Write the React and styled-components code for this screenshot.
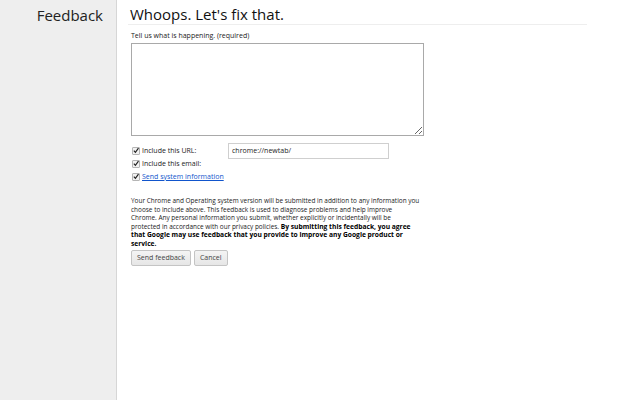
import React from "react";
import styled, { createGlobalStyle } from "styled-components";

const Global = createGlobalStyle`
  html, body { margin: 0; padding: 0; background: #fff; }
  body { font-family: "Open Sans", "Noto Sans", sans-serif; color: #222; }
`;

const Page = styled.div`
  display: flex;
  width: 640px;
  height: 400px;
  overflow: hidden;
`;

const Sidebar = styled.div`
  width: 117px;
  flex: none;
  background: #eeeeee;
  border-right: 1px solid #d6d6d6;
  box-sizing: border-box;
  text-align: right;
  padding: 4px 13px 0 0;
`;

const SideTitle = styled.div`
  font-size: 15px;
  color: #222;
  line-height: 22px;
`;

const Main = styled.div`
  flex: 1;
  padding: 0 53px 0 11px;
`;

const Header = styled.h1`
  margin: 0;
  font-weight: normal;
  font-size: 15px;
  line-height: 20px;
  padding: 4px 0 0 2px;
  border-bottom: 1px solid #eeeeee;
  color: #111;
`;

const Form = styled.div`
  padding: 6px 0 0 3px;
  font-size: 7px;
`;

const Label = styled.div`
  font-size: 7px;
  color: #222;
  line-height: 10px;
`;

const Area = styled.textarea`
  display: block;
  width: 293px;
  height: 93px;
  box-sizing: border-box;
  border: 1px solid #a9a9a9;
  margin: 2px 0 0 0;
  resize: both;
`;

const Checks = styled.div`
  margin-top: 8px;
  display: flex;
  flex-direction: column;
`;

const Row = styled.label`
  display: flex;
  align-items: center;
  height: 13px;
  font-size: 7px;
  line-height: 10px;
`;

const BoxWrap = styled.span`
  display: inline-flex;
  width: 6px;
  height: 6px;
  margin: 0 2px 0 1px;
  border: 1px solid #b5b5b5;
  border-radius: 1px;
  background: #f2f2f2;
  align-items: center;
  justify-content: center;
`;

const Hidden = styled.input`
  position: absolute;
  opacity: 0;
  width: 0;
  height: 0;
  margin: 0;
`;

const CheckBox = () => (
  <>
    <Hidden type="checkbox" defaultChecked />
    <BoxWrap>
      <svg width="7" height="7" viewBox="0 0 7 7">
        <path d="M1 3.6 L2.8 5.6 L6.4 0.8" fill="none" stroke="#222" strokeWidth="1.4" />
      </svg>
    </BoxWrap>
  </>
);

const RowLabel = styled.span`
  width: ${(p) => (p.w ? p.w + "px" : "auto")};
  color: #222;
`;

const Link = styled.a`
  color: #1155cc;
  text-decoration: underline;
`;

const UrlInput = styled.input`
  width: 161px;
  height: 16px;
  flex: none;
  box-sizing: border-box;
  border: 1px solid #cfcfcf;
  font-family: "Open Sans", sans-serif;
  font-size: 7px;
  padding: 0 3px;
  color: #222;
  margin: 0;
`;

const Notice = styled.p`
  margin: 14px 0 0 0;
  white-space: nowrap;
  font-size: 6.45px;
  line-height: 8.6px;
  color: #222;
`;

const Strong = styled.b`
  font-weight: bold;
  font-size: 6.7px;
  color: #000;
`;

const Buttons = styled.div`
  display: flex;
  gap: 3px;
  margin-top: 1px;
`;

const Button = styled.button`
  height: 16px;
  padding: 0 5px;
  font-family: "Open Sans", sans-serif;
  font-size: 7px;
  color: #444;
  background: linear-gradient(#f4f4f4, #e6e6e6);
  border: 1px solid #c4c4c4;
  border-radius: 2px;
  margin: 0;
`;

export default function App() {
  return (
    <>
      <Global />
      <Page>
        <Sidebar>
          <SideTitle>Feedback</SideTitle>
        </Sidebar>
        <Main>
          <Header>Whoops. Let's fix that.</Header>
          <Form>
            <Label>Tell us what is happening. (required)</Label>
            <Area />
            <Checks>
              <Row>
                <CheckBox />
                <RowLabel w={86}>Include this URL:</RowLabel>
                <UrlInput defaultValue="chrome://newtab/" />
              </Row>
              <Row>
                <CheckBox />
                <RowLabel>Include this email:</RowLabel>
              </Row>
              <Row>
                <CheckBox />
                <Link href="#">Send system information</Link>
              </Row>
            </Checks>
            <Notice>
              Your Chrome and Operating system version will be submitted in addition to any information you
              <br />
              choose to include above. This feedback is used to diagnose problems and help improve
              <br />
              Chrome. Any personal information you submit, whether explicitly or incidentally will be
              <br />
              protected in accordance with our privacy policies.{" "}
              <Strong>
                By submitting this feedback, you agree
                <br />
                that Google may use feedback that you provide to improve any Google product or
                <br />
                service.
              </Strong>
            </Notice>
            <Buttons>
              <Button>Send feedback</Button>
              <Button>Cancel</Button>
            </Buttons>
          </Form>
        </Main>
      </Page>
    </>
  );
}
